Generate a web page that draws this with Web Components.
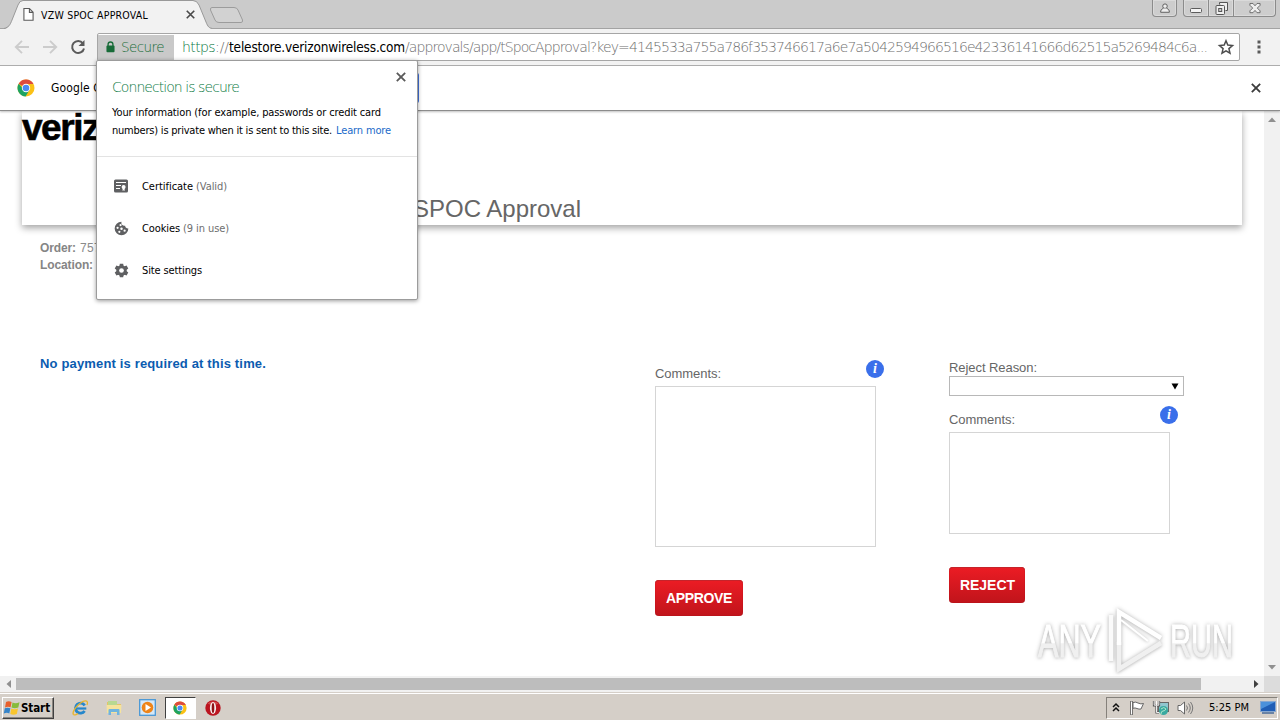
<!DOCTYPE html>
<html lang="en">
<head>
<meta charset="utf-8">
<title>VZW SPOC APPROVAL</title>
<style>
  body {
    margin: 0;
    width: 1280px;
    height: 720px;
    overflow: hidden;
    background: #fff;
    font-family: "DejaVu Sans Condensed", "DejaVu Sans", sans-serif;
    font-stretch: condensed;
    font-size: 11px;
    color: #000;
  }
</style>
</head>
<body>
<desktop-screen></desktop-screen>

<script>
const ICONS = {
  page: [12, 14, '<path d="M1 .6h6L11 4.6v8.8H1z M7 .8v4h4" fill="#fff" stroke="#5a5a5a" stroke-width="1.2"/>'],
  close: [12, 12, '<path d="M1 1l10 10M11 1L1 11" stroke="currentColor" stroke-width="2.200"/>'],
  back: [16, 16, '<path d="M15 8H2M8 1.800L1.800 8L8 14.200" fill="none" stroke="#ccc" stroke-width="1.900"/>'],
  forward: [16, 16, '<path d="M1 8h13M8 1.800L14.200 8L8 14.200" fill="none" stroke="#ccc" stroke-width="1.900"/>'],
  reload: [16, 16, '<path d="M12.900 4.300A6 6 0 1 0 14 9.400" fill="none" stroke="#5a5a5a" stroke-width="2"/><path d="M14.500 1v6h-6z" fill="#5a5a5a"/>'],
  lock: [10, 13, '<path d="M2.300 6V3.800a2.700 2.700 0 0 1 5.400 0V6" fill="none" stroke="#176b38" stroke-width="1.500"/><rect x=".5" y="5" width="9" height="7.500" rx="1" fill="#176b38"/>'],
  star: [16, 16, '<path d="M8 1.800l1.800 4.300 4.700.4-3.600 3.100 1.100 4.600L8 11.800l-4 2.400 1.100-4.600L1.500 6.500l4.700-.4z" fill="none" stroke="#4d4d4d" stroke-width="1.500"/>'],
  dots: [4, 14, '<path d="M.5.500h3v3h-3zM.5 5.500h3v3h-3zM.5 10.500h3v3h-3z" fill="#5a5a5a"/>'],
  chrome: [18, 18, '<circle cx="9" cy="9" r="8.500" fill="#fbc116"/><path d="M9 9L1.640 4.750A8.500 8.500 0 0 1 16.500 5H9z" fill="#dd4b3e"/><path d="M1.640 4.750A8.500 8.500 0 0 0 8.600 17.500L12.400 11 9 9H5.500z" fill="#1da362"/><circle cx="9" cy="9" r="4.200" fill="#fff"/><circle cx="9" cy="9" r="3.300" fill="#4a8af4"/>'],
  certificate: [14, 14, '<rect x="0" y=".5" width="14" height="13" rx="1.500" fill="#5f6062"/><path d="M2 3.500h10M2 6.500h5M2 9.500h4" stroke="#fff" stroke-width="1.200"/><circle cx="9.600" cy="8" r="2" fill="#fff"/><path d="M8.600 9h2v3l-1-.8-1 .8z" fill="#fff"/>'],
  cookie: [16, 16, '<path d="M8 .7A7.300 7.300 0 1 0 15.300 8 3 3 0 0 1 11.900 5 3.300 3.300 0 0 1 8 .700z" fill="#5f6062"/><g fill="#fff"><circle cx="7" cy="4.300" r="1.200"/><circle cx="3.800" cy="7.300" r="1.200"/><circle cx="8" cy="8.300" r="1.300"/><circle cx="5.700" cy="11.500" r="1.200"/><circle cx="11.300" cy="10.300" r="1.200"/></g>'],
  gear: [16, 16, '<g fill="#5f6062"><circle cx="8" cy="8" r="5.500"/><path d="M6.200.700h3.600l.5 3H5.700zM6.200 15.300h3.600l.5-3H5.700z"/><path d="M6.200.700h3.600l.5 3H5.700zM6.200 15.300h3.600l.5-3H5.700z" transform="rotate(60 8 8)"/><path d="M6.200.700h3.600l.5 3H5.700zM6.200 15.300h3.600l.5-3H5.700z" transform="rotate(120 8 8)"/></g><circle cx="8" cy="8" r="2.500" fill="#fff"/>'],
  user: [11, 11, '<circle cx="5.500" cy="3.500" r="2.500" fill="#eee" stroke="#555"/><path d="M3.700 6C1.500 6.500.700 8 .700 10.200h9.600C10.300 8 9.500 6.500 7.300 6" fill="#eee" stroke="#555"/>'],
  minimize: [12, 5, '<rect x=".5" y=".5" width="11" height="4" rx="1" fill="#f4f4f4" stroke="#5c5c5c"/>'],
  restore: [13, 13, '<path d="M4.500.500h8v8h-2M4.500.500v2" fill="#eee" stroke="#555"/><rect x="1" y="3.500" width="8.500" height="9" rx="1" fill="#eee" stroke="#555"/><rect x="3.700" y="6.500" width="3" height="3" fill="#ccc" stroke="#555"/>'],
  winclose: [13, 11, '<path d="M1 .5h3.300L6.500 3l2.200-2.500H12v2L9 5.500l3 3v2H8.700L6.500 8l-2.200 2.500H1v-2l3-3-3-3z" fill="#eee" stroke="#5a5a5a" stroke-width=".9"/>'],
  up: [8, 5, '<path d="M0 5L4 .500 8 5z" fill="#909090"/>'],
  down: [8, 5, '<path d="M0 0h8L4 4.500z" fill="#909090"/>'],
  left: [5, 8, '<path d="M5 0v8L.500 4z" fill="#909090"/>'],
  right: [5, 8, '<path d="M0 0v8L4.500 4z" fill="#404040"/>'],
  select: [8, 7, '<path d="M.5.500h7L4 6.500z" fill="#000"/>'],
  windows: [16, 16, '<path d="M2 2Q4.500 .5 7.600 2L6.600 7.300Q4 6 1 7.400z" fill="#e8602c"/><path d="M8.500 2.500Q11.500 4 15.500 2.200L14.300 7.600Q10.500 9 7.500 7.600z" fill="#87bb3a"/><path d="M.8 8.300Q3.500 7 6.400 8.300L5.300 13.500Q3 12-.2 13.500z" fill="#3684c9"/><path d="M7.300 8.500Q10.300 10 14 8.500L12.800 13.900Q9.500 15.500 6.300 13.900z" fill="#fac62d"/>'],
  ie: [17, 16, '<path d="M12.700 5.500A5 5 0 1 0 12.600 11" fill="none" stroke="#2687cb" stroke-width="2.800"/><path d="M4 8.500h10.300" stroke="#2687cb" stroke-width="2.200"/><path d="M15 5C17-.500 12 .300 8.500 3 4 6.300.3 11.500 1.200 14.200 1.700 15.500 4.500 14.800 6 13.500" fill="none" stroke="#e8b52e" stroke-width="1.300"/>'],
  folder: [16, 16, '<path d="M1 2h5l1 2h8v9H1z" fill="#e4c468"/><path d="M2 1h9v5H2z" fill="#b8d891"/><path d="M.5 5h15L15 13H1z" fill="#f6e39c"/><path d="M2.500 15V10q0-1 1-1h9q1 0 1 1v5h-2.500v-3h-6v3z" fill="#70b4df"/>'],
  player: [17, 17, '<rect x=".7" y=".7" width="15.600" height="15.600" fill="#d5e8f8" stroke="#4997d6" stroke-width="1.300"/><circle cx="8.500" cy="8.500" r="5.800" fill="#ee8418"/><path d="M6.500 5l5.500 3.500-5.500 3.500z" fill="#fff"/>'],
  opera: [16, 16, '<circle cx="8" cy="8" r="7.700" fill="#bb1520"/><path d="M2.500 3.500A7.700 7 0 0 1 13.500 3.500L8 6z" fill="#e16c68" opacity=".6"/><ellipse cx="8" cy="8" rx="3.100" ry="6" fill="#f7eeee"/><ellipse cx="8" cy="8" rx="1.300" ry="5" fill="#8f1216"/>'],
  chevrons: [8, 9, '<path d="M1 4l3-3 3 3M1 8l3-3 3 3" fill="none" stroke="#111" stroke-width="1.500"/>'],
  flag: [16, 16, '<path d="M2.500 1v14" stroke="#555" stroke-width="2.500"/><path d="M2.500 1.500v13" stroke="#fff"/><path d="M4 2.500q3-1 5 .5 3 1.500 5.500.5L12 9q-2 .5-4-.5t-4-.2z" fill="#fff" stroke="#666"/>'],
  network: [17, 16, '<rect x="5.500" y="2.500" width="10" height="9" fill="#8fc6cf" stroke="#666"/><path d="M1 1v4.500h5V1M3.500 6v6.500H6" fill="none" stroke="#555" stroke-width="2.200"/><path d="M1.200 1v4.200h4.600V1M3.500 5.500V12.500H6M3.500 1v4" fill="none" stroke="#fff" stroke-width=".9"/><circle cx="10.500" cy="10.500" r="4.500" fill="#38a9a0"/><path d="M8 9q3-3 5 0-1 2-3 2t-2 3" fill="none" stroke="#b1e8ca"/>'],
  speaker: [17, 14, '<path d="M1 4.500h2.500L7.500 1v12L3.500 9.500H1z" fill="#fff" stroke="#666"/><path d="M9.500 4.500q2 2.500 0 5M11.500 2.500q3.500 4.500 0 9M13.500 1q4.500 6 0 12" fill="none" stroke="#777"/>'],
  desktop: [16, 13, '<rect x=".5" y=".5" width="15" height="10" fill="#205eb5" stroke="#86a7d0"/><path d="M1 1h14L1 8z" fill="#4b91db"/><path d="M2 12h12" stroke="#466a9a" stroke-width="1.500"/>'],
};

class UiIcon extends HTMLElement {
  constructor() {
    super();
    this.attachShadow({ mode: 'open' });
  }

  connectedCallback() {
    const [w, h, body] = ICONS[this.getAttribute('name')];
    const size = Number(this.getAttribute('size')) || w;
    this.shadowRoot.innerHTML = `
      <style>
        :host { display: block; flex: none; line-height: 0; }
        svg { display: block; overflow: visible; }
      </style>
      <svg width="${size}" height="${size * h / w}" viewBox="0 0 ${w} ${h}">${body}</svg>
    `;
  }
}

// Text run tracked in or out until it fills the given width
class FitText extends HTMLElement {
  constructor() {
    super();
    this.attachShadow({ mode: 'open' });
    this.shadowRoot.innerHTML = `
      <style>
        :host { display: block; flex: none; }
        span { white-space: nowrap; }
      </style>
      <span><slot></slot></span>
    `;
  }

  connectedCallback() {
    const span = this.shadowRoot.querySelector('span');
    const natural = span.getBoundingClientRect().width;
    const width = Number(this.getAttribute('width'));
    span.style.letterSpacing = (width - natural) / this.textContent.length + 'px';
    this.style.width = width + 'px';
  }
}

class TabStrip extends HTMLElement {
  constructor() {
    super();
    this.attachShadow({ mode: 'open' });
    this.shadowRoot.innerHTML = `
      <style>
        :host { display: flex; height: 28px; background: #cbcbcb; border-bottom: 1px solid #a3a3a3; flex: none; }
        .tab { display: grid; width: 211px; height: 29px; flex: none; margin-left: 1px; }
        .tab > * { grid-area: 1 / 1; }
        .label { display: flex; align-items: center; padding: 0 17px 0 22px; }
        fit-text { margin-left: 7px; font-size: 10.500px; }
        .x { margin-left: auto; color: #4a4a4a; }
        .new { margin: 6px 0 0 -4px; }
        .spacer { flex: 1; }
        .btn { box-sizing: border-box; height: 17px; border: 1px solid #8b8b8b; border-top: 0; display: flex;
               align-items: center; justify-content: center; background: #cdcdcd; box-shadow: inset 0 0 0 1px #dadada; }
        .user { width: 25px; border-radius: 0 0 4px 4px; margin-right: 6px; }
        .group { display: flex; margin-right: 4px; }
        .group .btn { border-left-width: 0; }
        .group .btn:first-child { width: 26px; border-left-width: 1px; border-radius: 0 0 0 4px; padding-top: 4px; }
        .group .btn:nth-child(2) { width: 25px; }
        .group .btn:last-child { width: 42px; border-radius: 0 0 4px 0; }
      </style>
      <div class="tab">
        <svg width="211" height="29"><path d="M4 29C9 27 9 25 11 20L17 5Q18.500 1 22 1H192Q196 1 198 5L205 22C207 27 208 28 211 29" fill="#f2f2f2"/><path d="M3 28.500C8 27 9 25 11 20L17 5Q18.500 .5 22 .5H192Q196 .5 198 5L205 22C207 27 208 28 212 28.500" fill="none" stroke="#999"/></svg>
        <div class="label">
          <ui-icon name="page" size="11"></ui-icon>
          <fit-text width="107">VZW SPOC APPROVAL</fit-text>
          <ui-icon class="x" name="close" size="9"></ui-icon>
        </div>
      </div>
      <svg class="new" width="36" height="18"><path d="M4 1.500H26Q29 1.500 30 4L34.500 14Q35 16.500 33 16.500H11Q8 16.500 7 14L2.500 4Q2 1.500 4 1.500z" fill="#d2d2d2" stroke="#9c9c9c"/></svg>
      <div class="spacer"></div>
      <div class="btn user"><ui-icon name="user" size="10"></ui-icon></div>
      <div class="group">
        <div class="btn"><ui-icon name="minimize"></ui-icon></div>
        <div class="btn"><ui-icon name="restore"></ui-icon></div>
        <div class="btn"><ui-icon name="winclose" size="12"></ui-icon></div>
      </div>
    `;
  }
}

class AddressBar extends HTMLElement {
  constructor() {
    super();
    this.attachShadow({ mode: 'open' });
    this.shadowRoot.innerHTML = `
      <style>
        :host { display: flex; align-items: center; box-sizing: border-box; height: 37px; flex: none;
                background: #f2f2f2; border-bottom: 1px solid #b0b0b0; padding-left: 14px; }
        .nav { display: flex; gap: 12px; width: 83px; flex: none; }
        .box { display: flex; align-items: center; box-sizing: border-box; width: 1143px; height: 28px;
               border: 1px solid #a6a6a6; border-radius: 2px; background: #fff; font-size: 14px; color: #6e6e6e;
               font-family: "DejaVu Sans Light", "DejaVu Sans Condensed", "DejaVu Sans", sans-serif; }
        .chip { display: flex; align-items: center; gap: 6px; width: 76px; height: 25px; box-sizing: border-box;
                padding-left: 8px; background: #c9c9c9; color: #176b38; flex: none; font-size: 13.500px; }
        .url { display: flex; margin-left: 8px; flex: none; }
        .green { color: #0b7a3f; }
        .host { color: #000; font-family: "DejaVu Sans Condensed", "DejaVu Sans", sans-serif; font-size: 13.500px; }
        .star { margin-left: 11px; }
        .dots { margin-left: 17px; }
      </style>
      <div class="nav">
        <ui-icon name="back"></ui-icon>
        <ui-icon name="forward"></ui-icon>
        <ui-icon name="reload"></ui-icon>
      </div>
      <div class="box">
        <div class="chip"><ui-icon name="lock" size="9"></ui-icon><fit-text width="43">Secure</fit-text></div>
        <div class="url">
          <fit-text class="green" width="33">https</fit-text>
          <fit-text width="14">://</fit-text>
          <fit-text class="host" width="176">telestore.verizonwireless.com</fit-text>
          <fit-text width="802">/approvals/app/tSpocApproval?key=4145533a755a786f353746617a6e7a5042594966516e42336141666d62515a5269484c6a...</fit-text>
        </div>
        <ui-icon class="star" name="star"></ui-icon>
      </div>
      <ui-icon class="dots" name="dots"></ui-icon>
    `;
  }
}

class InfoBar extends HTMLElement {
  constructor() {
    super();
    this.attachShadow({ mode: 'open' });
    this.shadowRoot.innerHTML = `
      <style>
        :host { display: flex; align-items: center; box-sizing: border-box; height: 45px; flex: none; background: #fff;
                border-bottom: 1px solid #8c8c8c; box-shadow: 0 1px 2px rgba(0, 0, 0, .25); z-index: 1;
                padding: 0 19px 0 17px; }
        fit-text { margin-left: 16px; font-size: 12px; }
        .action { width: 70px; height: 30px; margin-left: 248px; border-radius: 2px; background: #4374e0; }
        .x { margin-left: auto; color: #3c3c3c; }
      </style>
      <ui-icon name="chrome"></ui-icon>
      <fit-text width="50">Google C</fit-text>
      <div class="action"></div>
      <ui-icon class="x" name="close" size="10"></ui-icon>
    `;
  }
}

class SitePopup extends HTMLElement {
  constructor() {
    super();
    this.attachShadow({ mode: 'open' });
    this.shadowRoot.innerHTML = `
      <style>
        :host { display: block; box-sizing: border-box; width: 322px; height: 240px; background: #fff;
                border: 1px solid #9c9c9c; border-radius: 2px; box-shadow: 0 1px 4px rgba(0, 0, 0, .4); }
        .top { box-sizing: border-box; height: 96px; padding: 16px 0 0 15px; border-bottom: 1px solid #e3e3e3; }
        .row { display: flex; justify-content: space-between; align-items: flex-start; padding-right: 11px; height: 27px; }
        .title { color: #0b7a3f; font-size: 14px; line-height: 20px; font-family: "DejaVu Sans Light", "DejaVu Sans Condensed", sans-serif; }
        .x { color: #5a5a5a; margin-top: -5px; }
        .line { display: flex; height: 18px; line-height: 18px; gap: 4px; }
        .link { color: #1b6ac9; }
        ul { list-style: none; margin: 0; padding: 8px 0 0 17px; }
        li { display: flex; align-items: center; height: 42px; }
        li ui-icon { width: 16px; margin-right: 12px; }
        .note { color: #6e6e6e; margin-left: 3px; }
      </style>
      <div class="top">
        <div class="row">
          <fit-text class="title" width="127">Connection is secure</fit-text>
          <ui-icon class="x" name="close" size="10"></ui-icon>
        </div>
        <div class="line"><fit-text width="269">Your information (for example, passwords or credit card</fit-text></div>
        <div class="line"><fit-text width="220">numbers) is private when it is sent to this site.</fit-text><fit-text class="link" width="55">Learn more</fit-text></div>
      </div>
      <ul>
        <li><ui-icon name="certificate"></ui-icon><fit-text width="51">Certificate</fit-text><fit-text class="note" width="31">(Valid)</fit-text></li>
        <li><ui-icon name="cookie" size="15"></ui-icon><fit-text width="38">Cookies</fit-text><fit-text class="note" width="46">(9 in use)</fit-text></li>
        <li><ui-icon name="gear" size="15"></ui-icon><fit-text width="60">Site settings</fit-text></li>
      </ul>
    `;
  }
}

class RedButton extends HTMLElement {
  constructor() {
    super();
    this.attachShadow({ mode: 'open' });
    this.shadowRoot.innerHTML = `
      <style>
        :host { display: block; }
        button { display: flex; align-items: center; width: 100%; height: 36px; margin: 0; padding: 0 0 0 11px; border: 0;
                 border-radius: 4px; background: linear-gradient(#ec1c24, #c0141b); color: #fff;
                 box-shadow: inset 0 1px 0 #c5242b, inset 0 0 1px #8f1014;
                 font: bold 14px "Liberation Sans", Arial, sans-serif; }
      </style>
      <button><slot></slot></button>
    `;
  }
}

class CommentBox extends HTMLElement {
  constructor() {
    super();
    this.attachShadow({ mode: 'open' });
    this.shadowRoot.innerHTML = `
      <style>
        :host { display: block; }
        .head { display: flex; justify-content: space-between; width: 229px; height: 26px; }
        fit-text { line-height: 17px; padding-top: 5px; height: 17px; }
        .info { width: 18px; height: 18px; border-radius: 50%; background: #3a6fea; color: #fff; text-align: center;
                font: italic bold 14px/17px "Liberation Serif", serif; }
        .area { box-sizing: border-box; width: 221px; height: var(--area-height); border: 1px solid #d5d5d5; }
      </style>
      <div class="head"><fit-text width="66">Comments:</fit-text><div class="info">i</div></div>
      <div class="area"></div>
    `;
  }
}

class ApprovalPage extends HTMLElement {
  constructor() {
    super();
    this.attachShadow({ mode: 'open' });
    this.shadowRoot.innerHTML = `
      <style>
        :host { display: block; width: 1264px; height: 565px; overflow: hidden; background: #fff;
                font-family: "Liberation Sans", Arial, sans-serif; font-stretch: normal; font-size: 13px; color: #666; }
        header { box-sizing: border-box; height: 114px; margin: 0 22px; background: #fff; box-shadow: 0 3px 7px rgba(0, 0, 0, .36); }
        .logo { font-weight: bold; font-size: 37px; line-height: 34px; height: 34px; color: #000; -webkit-text-stroke: .6px #000; }
        .heading { display: flex; justify-content: flex-end; padding-right: 661px; margin-top: 50px; font-size: 24px; line-height: 28px; }
        .order { padding: 15px 0 0 40px; color: #8a8a8a; height: 115px; }
        .order div { display: flex; gap: 4px; line-height: 17px; height: 17px; font-size: 12px; }
        b { color: #858585; }
        .form { display: grid; grid-template-columns: 615px 294px 235px; padding-left: 40px; }
        .message { font-weight: bold; color: #0b5cb0; line-height: 17px; }
        .col { padding-top: 5px; }
        .reason { line-height: 16px; height: 16px; display: flex; }
        .select { display: flex; align-items: center; justify-content: flex-end; box-sizing: border-box; width: 235px; height: 20px;
                  border: 1px solid #b8b8b8; margin-bottom: 10px; padding-right: 4px; }
        red-button { margin-top: 33px; }
      </style>
      <header>
        <div class="logo"><fit-text width="77">veriz</fit-text></div>
        <div class="heading"><fit-text width="168">SPOC Approval</fit-text></div>
      </header>
      <div class="order">
        <div><b><fit-text width="36">Order:</fit-text></b><fit-text width="21">757</fit-text></div>
        <div><b><fit-text width="53">Location:</fit-text></b></div>
      </div>
      <div class="form">
        <div class="message"><fit-text width="226">No payment is required at this time.</fit-text></div>
        <div class="col">
          <comment-box style="--area-height: 161px"></comment-box>
          <red-button style="width: 88px"><fit-text width="66">APPROVE</fit-text></red-button>
        </div>
        <div class="col">
          <div class="reason"><fit-text width="88">Reject Reason:</fit-text></div>
          <div class="select"><ui-icon name="select"></ui-icon></div>
          <comment-box style="--area-height: 102px"></comment-box>
          <red-button style="width: 76px"><fit-text width="55">REJECT</fit-text></red-button>
        </div>
      </div>
    `;
  }
}

class ScrollBar extends HTMLElement {
  constructor() {
    super();
    this.attachShadow({ mode: 'open' });
    this.shadowRoot.innerHTML = `
      <style>
        :host { display: flex; box-sizing: border-box; align-items: center; justify-content: space-between; background: #f1f1f1; }
        :host([vertical]) { flex-direction: column; width: 16px; height: 565px; padding: 6px 0 6px; }
        :host(:not([vertical])) { height: 16px; width: 1264px; padding: 0 5px 0 6px; }
        .thumb { width: 1185px; height: 12px; background: #bdbdbd; margin: 0 auto 0 5px; }
        :host([vertical]) .thumb { display: none; }
      </style>
      <slot name="start"></slot>
      <div class="thumb"></div>
      <slot name="end"></slot>
    `;
  }
}

class TaskBar extends HTMLElement {
  constructor() {
    super();
    this.attachShadow({ mode: 'open' });
    this.shadowRoot.innerHTML = `
      <style>
        :host { display: flex; align-items: center; box-sizing: border-box; height: 28px; flex: none; background: #d5cfc8;
                border-top: 1px solid #d5cfc8; box-shadow: inset 0 1px 0 #fff; padding: 2px 2px 0; }
        .start { display: flex; align-items: center; gap: 1px; box-sizing: border-box; width: 52px; height: 22px; padding-left: 1px;
                 border: 1px solid; border-color: #fff #404040 #404040 #fff; box-shadow: inset -1px -1px 0 #8a8680;
                 font: bold 11.500px "DejaVu Sans Condensed", "DejaVu Sans", sans-serif; }
        .apps { display: flex; align-items: center; margin-left: 10px; }
        .app { display: flex; align-items: center; justify-content: center; box-sizing: border-box; width: 33.500px; height: 22px; }
        .app.active { width: 31px; margin: 0 1px 0 0; background: #fff; border: 1px solid; border-color: #404040 #fff #fff #404040; }
        .tray { display: flex; align-items: center; box-sizing: border-box; width: 172px; height: 22px; margin-left: auto;
                padding-left: 5px; border: 1px solid; border-color: #85817b #fff #fff #85817b; }
        .tray ui-icon:nth-of-type(2) { margin-left: 9px; }
        .tray ui-icon:nth-of-type(3) { margin-left: 8px; }
        .tray ui-icon:nth-of-type(4) { margin-left: 7px; }
        .tray fit-text { margin: 0 11px 0 15px; }
      </style>
      <div class="start"><ui-icon name="windows"></ui-icon><fit-text width="29">Start</fit-text></div>
      <div class="apps">
        <div class="app"><ui-icon name="ie"></ui-icon></div>
        <div class="app"><ui-icon name="folder"></ui-icon></div>
        <div class="app"><ui-icon name="player"></ui-icon></div>
        <div class="app active"><ui-icon name="chrome" size="14"></ui-icon></div>
        <div class="app"><ui-icon name="opera"></ui-icon></div>
      </div>
      <div class="tray">
        <ui-icon name="chevrons"></ui-icon>
        <ui-icon name="flag"></ui-icon>
        <ui-icon name="network"></ui-icon>
        <ui-icon name="speaker"></ui-icon>
        <fit-text width="40">5:25 PM</fit-text>
        <ui-icon name="desktop"></ui-icon>
      </div>
    `;
  }
}

class WaterMark extends HTMLElement {
  constructor() {
    super();
    this.attachShadow({ mode: 'open' });
    this.shadowRoot.innerHTML = `
      <style>
        :host { display: block; font: 46px "Liberation Sans Narrow", "Liberation Sans", sans-serif;
                filter: drop-shadow(0 0 2px rgba(0, 0, 0, .28)) drop-shadow(0 1px 1px rgba(0, 0, 0, .08)); }
        svg { display: block; }
        text { fill: url(#fade); stroke: url(#fade); stroke-width: 1px; }
      </style>
      <svg width="212" height="72" viewBox="0 0 212 72">
        <defs>
          <linearGradient id="fade" x1="0" y1="0" x2="0" y2="72" gradientUnits="userSpaceOnUse">
            <stop offset=".52" stop-color="#fff"/><stop offset=".54" stop-color="#f0f0f0"/>
          </linearGradient>
        </defs>
        <text x="8" y="52" textLength="63" lengthAdjust="spacingAndGlyphs">ANY</text>
        <text x="140" y="52" textLength="63" lengthAdjust="spacingAndGlyphs">RUN</text>
        <g fill="none" stroke-width="4.500">
          <path d="M89 64V37M89 37V64L131 38" stroke="#f0f0f0"/>
          <path d="M81 56V10" stroke="#fafafa"/>
          <path d="M89 40V7L131 33" stroke="#fff"/>
          <path d="M91 15L118 36" stroke="#fff" stroke-width="2"/>
        </g>
      </svg>
    `;
  }
}

class DesktopScreen extends HTMLElement {
  constructor() {
    super();
    this.attachShadow({ mode: 'open' });
    this.shadowRoot.innerHTML = `
      <style>
        :host { display: flex; flex-direction: column; position: relative; width: 1280px; height: 720px; overflow: hidden; }
        .view { display: grid; grid-template-columns: 1264px 16px; grid-template-rows: 565px 16px; flex: none; }
        .corner { background: #dcdcdc; }
        site-popup { position: absolute; left: 96px; top: 60px; z-index: 2; }
        water-mark { position: absolute; left: 1030px; top: 605px; z-index: 2; }
      </style>
      <tab-strip></tab-strip>
      <address-bar></address-bar>
      <info-bar></info-bar>
      <div class="view">
        <approval-page></approval-page>
        <scroll-bar vertical>
          <ui-icon slot="start" name="up"></ui-icon>
          <ui-icon slot="end" name="down"></ui-icon>
        </scroll-bar>
        <scroll-bar>
          <ui-icon slot="start" name="left"></ui-icon>
          <ui-icon slot="end" name="right"></ui-icon>
        </scroll-bar>
        <div class="corner"></div>
      </div>
      <task-bar></task-bar>
      <site-popup></site-popup>
      <water-mark></water-mark>
    `;
  }
}

customElements.define('ui-icon', UiIcon);
customElements.define('tab-strip', TabStrip);
customElements.define('address-bar', AddressBar);
customElements.define('info-bar', InfoBar);
customElements.define('site-popup', SitePopup);
customElements.define('red-button', RedButton);
customElements.define('comment-box', CommentBox);
customElements.define('approval-page', ApprovalPage);
customElements.define('scroll-bar', ScrollBar);
customElements.define('task-bar', TaskBar);
customElements.define('water-mark', WaterMark);
customElements.define('desktop-screen', DesktopScreen);
// Last, so every text run is already laid out when it is measured
customElements.define('fit-text', FitText);
</script>
</body>
</html>
